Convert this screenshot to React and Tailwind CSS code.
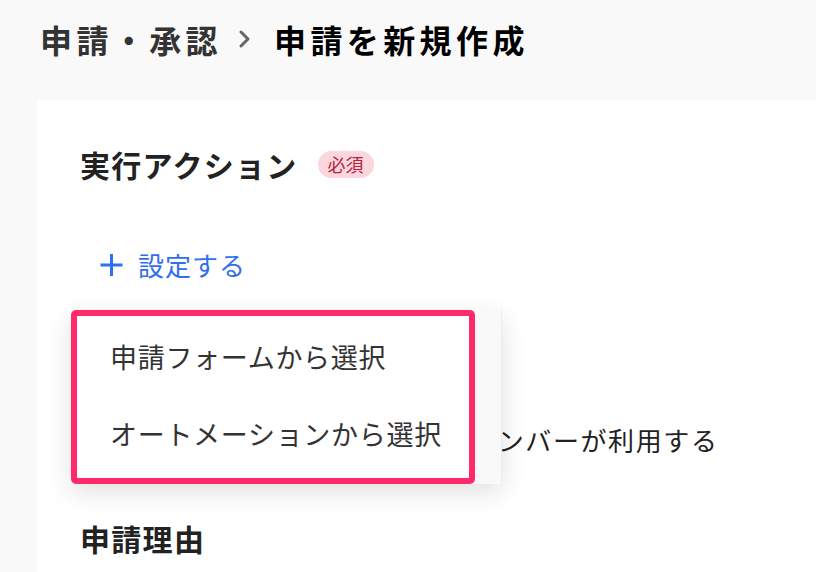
const font = { fontFamily: '"Noto Sans CJK JP", "Noto Sans", sans-serif' }

function Breadcrumb() {
  return (
    <div className="flex h-[78px] items-center pl-[40px]">
      <span className="text-[32px] font-bold leading-none tracking-[4.4px] text-[#333]">申請・承認</span>
      <svg className="ml-[16px] mr-[22px] h-[20px] w-[14px]" viewBox="0 0 14 20" fill="none">
        <path d="M3 3l7 7-7 7" stroke="#666" strokeWidth="3" strokeLinecap="round" strokeLinejoin="round" />
      </svg>
      <span className="text-[32px] font-bold leading-none tracking-[4.4px] text-black">申請を新規作成</span>
    </div>
  )
}

function PlusIcon() {
  return (
    <svg className="mr-[15px] h-[24px] w-[23px]" viewBox="0 0 23 24" fill="none">
      <path d="M11.5 1v22M0.5 12h22" stroke="#2f6ff0" strokeWidth="3" />
    </svg>
  )
}

function ActionMenu() {
  return (
    <div className="absolute left-[34px] top-[210px] flex h-[174px] w-[431px] bg-[#f9f9fa] shadow-[0_8px_24px_rgba(0,0,0,0.12)]">
      <div className="flex w-[404px] flex-col gap-[41px] rounded-[5px] border-[6px] border-[#ff2a6a] bg-white pl-[33px] pt-[23px] text-[27px] leading-[36px] tracking-[0.7px] text-[#333]">
        <div>申請フォームから選択</div>
        <div>オートメーションから選択</div>
      </div>
      <div className="flex-1 border-r border-[#ececee]" />
    </div>
  )
}

export default function App() {
  return (
    <div className="h-[572px] w-[816px] overflow-hidden bg-[#f9f9f9]" style={font}>
      <Breadcrumb />
      <div className="relative ml-[37px] mt-[22px] h-[500px] bg-white pl-[43px] pt-[44px]">
        <div className="flex items-center">
          <h2 className="text-[30px] font-bold leading-[40px] tracking-[1.3px] text-[#222]">実行アクション</h2>
          <span className="ml-[20px] rounded-full bg-[#fbd6dc] px-[10px] text-[18px] leading-[27px] text-[#b3233b]">必須</span>
        </div>
        <button className="ml-[20px] mt-[63px] flex items-center text-[26px] leading-[36px] tracking-[1px] text-[#2f6ff0]">
          <PlusIcon />
          設定する
        </button>
        <div className="ml-[5px] mt-[139px] text-[26px] leading-[36px] tracking-[1.6px] text-[#222]">
          アクションの実行は、申請したメンバーが利用する
        </div>
        <h2 className="mt-[60px] text-[30px] font-bold leading-[40px] tracking-[1.3px] text-[#222]">申請理由</h2>
        <ActionMenu />
      </div>
    </div>
  )
}
